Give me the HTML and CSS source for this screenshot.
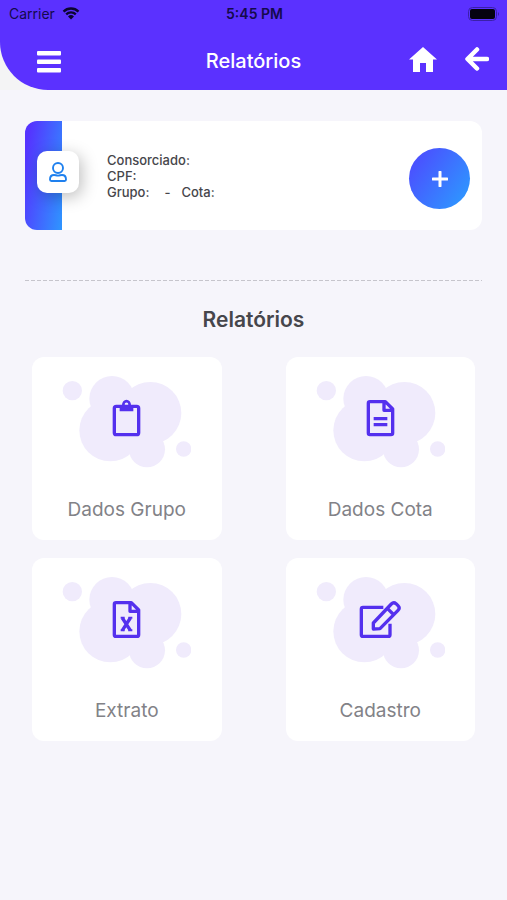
FILE: index.html
```html
<!DOCTYPE html>
<html lang="pt-BR">
<head>
<meta charset="utf-8">
<meta name="viewport" content="width=device-width, initial-scale=1">
<title>Relatórios</title>
<link rel="stylesheet" href="styles.css">
</head>
<body>
<svg class="defs" aria-hidden="true">
  <symbol id="cloud" viewBox="128 92 387 276">
    <circle cx="159" cy="136" r="29"/>
    <circle cx="278" cy="160" r="68"/>
    <circle cx="393" cy="203" r="93"/>
    <circle cx="273" cy="255" r="93"/>
    <circle cx="383" cy="312" r="54"/>
    <circle cx="493" cy="311" r="23"/>
  </symbol>
</svg>
<div class="top">
  <header class="header">
    <div class="status">
      <div class="carrier">
        <span>Carrier</span>
        <svg class="wifi" viewBox="0 0 18 13" aria-hidden="true">
          <path d="M1.500 4.600a10.600 10.600 0 0 1 15 0M4.200 7.400a6.800 6.800 0 0 1 9.600 0" fill="none" stroke="currentColor" stroke-width="2.300"/>
          <path d="M9 12.500 6 9.500a4.300 4.300 0 0 1 6 0z" fill="currentColor"/>
        </svg>
      </div>
      <span class="time">5:45 PM</span>
      <svg class="battery" viewBox="0 0 32 14" aria-hidden="true">
        <rect x=".5" y=".5" width="28" height="13" rx="4" fill="none" stroke="#3a20a8"/>
        <rect x="2" y="2" width="25" height="10" rx="2" fill="#05020f"/>
        <path d="M30 5q2 2 0 4z" fill="#3a20a8"/>
      </svg>
    </div>
    <nav class="bar">
      <button class="icon-btn" type="button" aria-label="Menu">
        <svg class="menu" viewBox="0 0 24 22" aria-hidden="true"><g fill="currentColor"><rect y="0" width="24" height="4.500" rx="1"/><rect y="8.500" width="24" height="4.500" rx="1"/><rect y="17" width="24" height="4.500" rx="1"/></g></svg>
      </button>
      <h1 class="title">Relatórios</h1>
      <div class="actions">
        <button class="icon-btn" type="button" aria-label="Início">
          <svg class="home" viewBox="0 0 28 25" aria-hidden="true"><path d="M14 0 28 12.500h-4V25h-7v-9h-6v9H4V12.500H0z" fill="currentColor"/></svg>
        </button>
        <button class="icon-btn" type="button" aria-label="Voltar">
          <svg class="back" viewBox="0 0 24 24" aria-hidden="true"><path d="M12 2.500 2.500 12l9.500 9.500M3 12h19" fill="none" stroke="currentColor" stroke-width="4.500" stroke-linejoin="round" stroke-linecap="round"/></svg>
        </button>
      </div>
    </nav>
  </header>
</div>
<main class="main">
  <section class="member">
    <div class="strip">
      <span class="avatar">
        <svg viewBox="0 0 18 20" aria-hidden="true"><g fill="none" stroke="currentColor" stroke-width="1.900"><circle cx="9" cy="6" r="5"/><path d="M1 17.500c0-3 1.500-4.500 4-4.500 1.400 0 2.400.6 4 .6s2.600-.6 4-.6c2.500 0 4 1.500 4 4.500 0 1.100-.4 1.500-1.400 1.500H2.400C1.400 19 1 18.600 1 17.500z"/></g></svg>
      </span>
    </div>
    <div class="details">
      <div>Consorciado:</div>
      <div>CPF:</div>
      <div class="quota"><span>Grupo:</span><span class="dash">-</span><span>Cota:</span></div>
    </div>
    <button class="add" type="button" aria-label="Adicionar">
      <svg viewBox="0 0 16 16" aria-hidden="true"><path d="M8 1v14M1 8h14" stroke="currentColor" stroke-width="3" stroke-linecap="round"/></svg>
    </button>
  </section>
  <hr class="rule">
  <h2 class="heading">Relatórios</h2>
  <div class="grid">
    <button class="card" type="button">
      <svg class="art" viewBox="128 92 387 276" aria-hidden="true">
        <use href="#cloud" x="128" y="92" width="387" height="276" class="cloud"/>
        <g class="line"><rect x="285" y="183" width="73" height="85" rx="6"/></g>
        <path class="solid" fill-rule="evenodd" d="M301 179h7a13 15 0 0 1 27 0h7v19h-41zM316 177a5.500 5.500 0 1 0 11 0a5.500 5.500 0 1 0-11 0z"/>
      </svg>
      <span>Dados Grupo</span>
    </button>
    <button class="card" type="button">
      <svg class="art" viewBox="128 92 387 276" aria-hidden="true">
        <use href="#cloud" x="128" y="92" width="387" height="276" class="cloud"/>
        <g class="line"><path d="M290 169h46l22 22v72q0 5-5 5h-63q-5 0-5-5v-89q0-5 5-5zM332 169v26h26M301 220h41M301 238h41"/></g>
      </svg>
      <span>Dados Cota</span>
    </button>
    <button class="card" type="button">
      <svg class="art" viewBox="128 92 387 276" aria-hidden="true">
        <use href="#cloud" x="128" y="92" width="387" height="276" class="cloud"/>
        <g class="line"><path d="M290 169h46l22 22v74q0 5-5 5h-63q-5 0-5-5v-91q0-5 5-5zM332 169v26h26M309 215l24 37M333 215l-24 37"/><path class="thin" d="M304 214h12M327 214h12M304 252h12M327 252h12"/></g>
      </svg>
      <span>Extrato</span>
    </button>
    <button class="card" type="button">
      <svg class="art" viewBox="128 92 387 276" aria-hidden="true">
        <use href="#cloud" x="128" y="92" width="387" height="276" class="cloud"/>
        <g class="line"><path d="M330 183h-61q-5 0-5 5v77q0 5 5 5h76q5 0 5-5v-33"/><path d="M300 248v-18l54-57q7-7 14-1l6 6q7 7 0 14l-54 55zM342 186l20 20"/></g>
      </svg>
      <span>Cadastro</span>
    </button>
  </div>
</main>
</body>
</html>
```
FILE: styles.css
```css
* { box-sizing: border-box; }

body {
  margin: 0;
  min-height: 100vh;
  background: #f6f5fb;
  font-family: Inter, "Liberation Sans", sans-serif;
  color: #46464b;
}

button {
  font: inherit;
  color: inherit;
  border: 0;
  padding: 0;
  background: none;
  cursor: pointer;
}

svg { display: block; }

.defs {
  position: absolute;
  width: 0;
  height: 0;
}

.top { background: #f4f4f5; }

.header {
  background: #5b31ff;
  border-bottom-left-radius: 48px;
  color: #fff;
  padding-bottom: 8px;
}

.status {
  display: grid;
  grid-template-columns: 1fr auto 1fr;
  align-items: center;
  height: 27px;
  padding: 0 7px 0 9px;
  color: #140a4c;
  font-size: 14px;
}

.carrier {
  display: flex;
  align-items: center;
  gap: 7px;
}

.wifi { width: 18px; height: 13px; color: #0b0530; }
.time { font-weight: 600; }
.battery { width: 32px; height: 14px; justify-self: end; }

.bar {
  display: grid;
  grid-template-columns: 1fr auto 1fr;
  align-items: center;
  height: 55px;
  padding: 0 18px 0 37px;
}

.bar > .icon-btn { justify-self: start; padding-top: 14px; }
.title { margin: 12px 19px 0 0; font-size: 20px; font-weight: 500; line-height: 24px; }

.actions {
  display: flex;
  gap: 28px;
  justify-self: end;
  padding-top: 9px;
}

.icon-btn { display: flex; align-items: center; }
.menu { width: 24px; height: 22px; }
.home { width: 28px; height: 25px; }
.back { width: 24px; height: 24px; }

.main { padding: 31px 25px; }

.member {
  display: flex;
  align-items: center;
  height: 109px;
  padding-right: 12px;
  background: #fff;
  border-radius: 12px;
}

.strip {
  display: flex;
  align-items: center;
  align-self: stretch;
  width: 37px;
  padding-left: 12px;
  padding-bottom: 8px;
  border-radius: 12px 0 0 12px;
  background: linear-gradient(100deg, #5533ff 10%, #2e96ff);
}

.avatar {
  display: grid;
  place-items: center;
  flex: none;
  width: 42px;
  height: 42px;
  border-radius: 10px;
  background: #fff;
  color: #1f80ee;
  box-shadow: 3px 4px 16px rgba(0, 0, 0, .25);
}

.avatar svg { width: 18px; height: 20px; }

.details {
  flex: 1;
  margin-left: 45px;
  font-size: 13px;
  font-weight: 500;
  line-height: 16px;
}

.quota { display: flex; }
.dash { margin: 0 11px 0 15px; }

.add {
  display: grid;
  place-items: center;
  width: 61px;
  height: 61px;
  margin-top: 6px;
  border-radius: 50%;
  color: #fff;
  background: linear-gradient(125deg, #4b4fff 12%, #2e96ff 90%);
}

.add svg { width: 16px; height: 16px; }

.rule {
  height: 1px;
  margin: 50px 0 0;
  border: 0;
  background: repeating-linear-gradient(90deg, #c6c5cc 0 4px, transparent 4px 6px);
}

.heading {
  margin: 25px 0 23px;
  text-align: center;
  font-size: 21px;
  font-weight: 600;
  line-height: 28px;
}

.grid {
  display: grid;
  grid-template-columns: 1fr 1fr;
  gap: 18px 64px;
  padding: 0 7px;
}

.card {
  display: flex;
  flex-direction: column;
  align-items: center;
  gap: 30px;
  padding: 19px 0 18px;
  border-radius: 12px;
  background: #fff;
  color: #828287;
  font-size: 19px;
  line-height: 24px;
}

.art { width: 129px; height: 92px; }
.cloud { fill: #f0ebfc; }

.line {
  fill: none;
  stroke: #5430ee;
  stroke-width: 10;
  stroke-linejoin: round;
}

.thin { stroke-width: 6; }
.solid { fill: #5430ee; }
```
